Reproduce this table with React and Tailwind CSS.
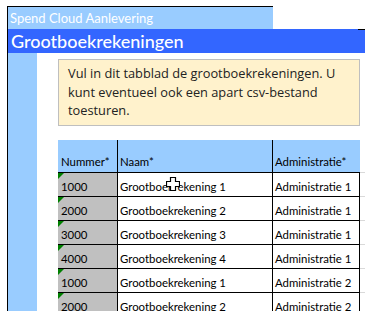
const rows = [
  ['1000', 'Grootboekrekening 1', 'Administratie 1'],
  ['2000', 'Grootboekrekening 2', 'Administratie 1'],
  ['3000', 'Grootboekrekening 3', 'Administratie 1'],
  ['4000', 'Grootboekrekening 4', 'Administratie 1'],
  ['1000', 'Grootboekrekening 1', 'Administratie 2'],
  ['2000', 'Grootboekrekening 2', 'Administratie 2'],
];

const CellCursor = () => (
  <svg className="absolute left-[166px] top-[177px]" width="14" height="14" viewBox="0 0 14 14">
    <path d="M4.5 0.5h5v4h4v5h-4v4h-5v-4h-4v-5h4z" fill="#fff" stroke="#000" strokeWidth="1.2" />
  </svg>
);

export default function App() {
  return (
    <div className="relative w-[365px] h-[311px] overflow-hidden bg-white">
      <div className="ml-[7px] mt-[6px] h-[305px] border-l border-black flex flex-col">
        {/* Title */}
        <div className="w-[265px] h-[23px] border-t border-black bg-[#99ccff] pl-[2px] text-white text-[13px] leading-[22px] font-['Lato',sans-serif]">
          Spend Cloud Aanlevering
        </div>
        <div className="relative h-[25px] bg-[#3366ff] pl-[3px] text-white text-[18px] leading-[24px] font-['Lato',sans-serif] font-medium">
          Grootboekrekeningen
          <span className="absolute top-0 right-0 w-[7px] h-px bg-black" />
        </div>

        <div className="flex flex-1">
          <div className="w-[29px] bg-[#99ccff]" />
          <div className="flex-1 pl-[21px] pt-[6px]">
            {/* Note */}
            <div className="w-[302px] h-[67px] bg-[#fff2cc] border border-[#bfbfbf] pl-[9px] pt-[4px] pr-2 text-[12.8px] leading-[18.5px] text-[#222] font-['Open_Sans',sans-serif]">
              Vul in dit tabblad de grootboekrekeningen. U kunt eventueel ook een apart csv-bestand toesturen.
            </div>

            {/* Table */}
            <div className="mt-[14px] text-[11.4px] text-black font-['Lato',sans-serif]">
              <div className="flex h-[33px]">
                <div className="w-[60px] bg-[#99ccff] border-r border-b border-black flex items-end pl-[3px] pb-[3px] leading-[15px]">Nummer*</div>
                <div className="w-[155px] bg-[#99ccff] border-r border-b border-black flex items-end pl-[2px] pb-[3px] leading-[15px]">Naam*</div>
                <div className="w-[87px] bg-[#99ccff] border-b border-black flex items-end pl-[2px] pb-[3px] leading-[15px]">Administratie*</div>
                <div className="flex-1 border-b border-[#d9d9d9]" />
              </div>
              {rows.map((r, i) => (
                <div key={i} className="flex h-[24px]">
                  <div className="relative w-[60px] bg-[#c0c0c0] border-r border-b border-black flex items-end pl-[3px] pb-[2px] leading-[15px]">
                    <span className="absolute left-0 top-0 w-0 h-0 border-t-[6px] border-r-[6px] border-t-[#008000] border-r-transparent" />
                    {r[0]}
                  </div>
                  <div className="w-[155px] border-r border-b border-black flex items-end pl-[2px] pb-[2px] leading-[15px]">{r[1]}</div>
                  <div className="w-[87px] border-r border-b border-black flex items-end pl-[2px] pb-[2px] leading-[15px]">{r[2]}</div>
                  <div className="flex-1 border-b border-[#d9d9d9]" />
                </div>
              ))}
            </div>
          </div>
        </div>
      </div>
      <CellCursor />
    </div>
  );
}
